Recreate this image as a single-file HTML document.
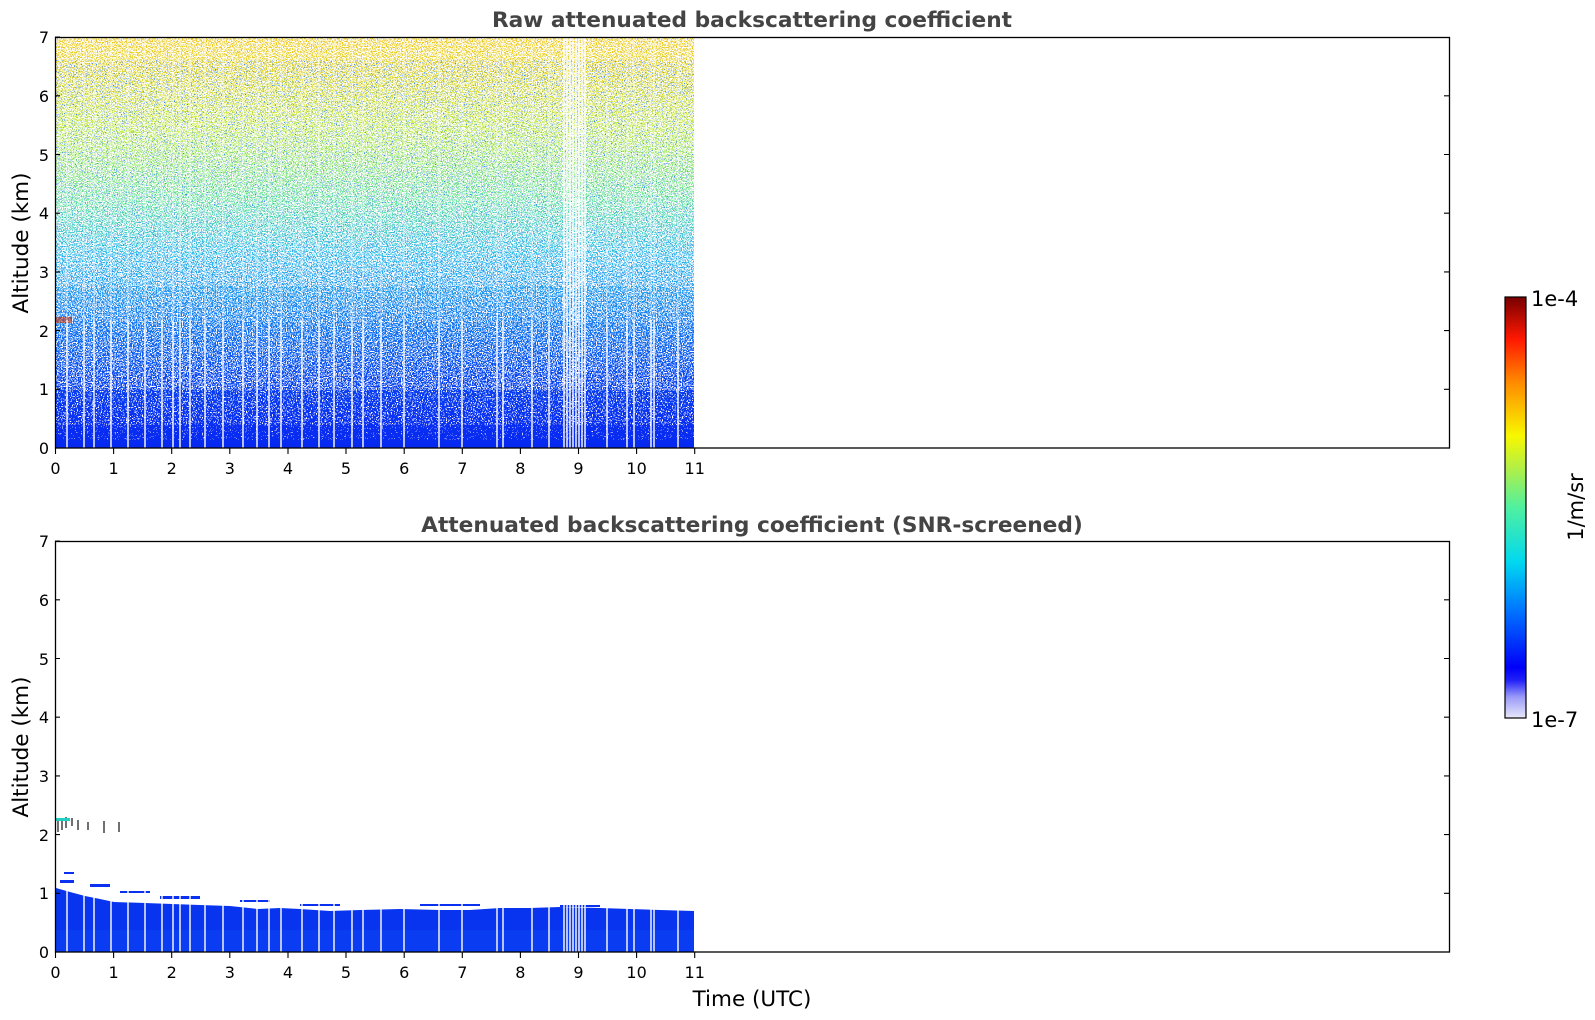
<!DOCTYPE html>
<html><head><meta charset="utf-8"><style>
html,body{margin:0;padding:0;background:#fff;}
svg{display:block;font-family:"DejaVu Sans","Liberation Sans",sans-serif;}
</style></head><body>
<svg width="1595" height="1020" viewBox="0 0 1595 1020" xmlns="http://www.w3.org/2000/svg">
<defs>
<linearGradient id="gTop" x1="0" y1="1" x2="0" y2="0">
<stop offset="0" stop-color="#0628f0"/>
<stop offset="0.06" stop-color="#0a30f2"/>
<stop offset="0.17" stop-color="#0a44f0"/>
<stop offset="0.32" stop-color="#1580f0"/>
<stop offset="0.47" stop-color="#30c0e8"/>
<stop offset="0.6" stop-color="#70e8a0"/>
<stop offset="0.78" stop-color="#c8ee50"/>
<stop offset="1" stop-color="#f0c820"/>
</linearGradient>
<linearGradient id="gCb" x1="0" y1="1" x2="0" y2="0">
<stop offset="0" stop-color="#e8e8fa"/>
<stop offset="0.05" stop-color="#9a9af8"/>
<stop offset="0.09" stop-color="#2020f8"/>
<stop offset="0.12" stop-color="#0000f8"/>
<stop offset="0.25" stop-color="#0070ff"/>
<stop offset="0.37" stop-color="#00d8f0"/>
<stop offset="0.5" stop-color="#50f0a0"/>
<stop offset="0.6" stop-color="#b8f040"/>
<stop offset="0.67" stop-color="#f8f800"/>
<stop offset="0.8" stop-color="#ff8800"/>
<stop offset="0.9" stop-color="#ff1800"/>
<stop offset="1" stop-color="#780000"/>
</linearGradient>
<filter id="n1" x="0" y="0" width="1" height="1" filterUnits="objectBoundingBox">
<feTurbulence type="fractalNoise" baseFrequency="0.8" numOctaves="1" seed="3"/>
<feColorMatrix type="matrix" values="0 0 0 0 1  0 0 0 0 1  0 0 0 0 1  20 0 0 0 -11.5"/>
<feComponentTransfer><feFuncA type="discrete" tableValues="0 1"/></feComponentTransfer>
</filter>
<filter id="n2" x="0" y="0" width="1" height="1" filterUnits="objectBoundingBox">
<feTurbulence type="fractalNoise" baseFrequency="0.8" numOctaves="1" seed="5"/>
<feColorMatrix type="matrix" values="0 0 0 0 1  0 0 0 0 1  0 0 0 0 1  20 0 0 0 -10.2"/>
<feComponentTransfer><feFuncA type="discrete" tableValues="0 1"/></feComponentTransfer>
</filter>
<filter id="n25" x="0" y="0" width="1" height="1" filterUnits="objectBoundingBox">
<feTurbulence type="fractalNoise" baseFrequency="0.8" numOctaves="1" seed="6"/>
<feColorMatrix type="matrix" values="0 0 0 0 1  0 0 0 0 1  0 0 0 0 1  20 0 0 0 -9.7"/>
<feComponentTransfer><feFuncA type="discrete" tableValues="0 1"/></feComponentTransfer>
</filter>
<filter id="n3" x="0" y="0" width="1" height="1" filterUnits="objectBoundingBox">
<feTurbulence type="fractalNoise" baseFrequency="0.8" numOctaves="1" seed="7"/>
<feColorMatrix type="matrix" values="0 0 0 0 1  0 0 0 0 1  0 0 0 0 1  20 0 0 0 -9.3"/>
<feComponentTransfer><feFuncA type="discrete" tableValues="0 1"/></feComponentTransfer>
</filter>
<filter id="n4" x="0" y="0" width="1" height="1" filterUnits="objectBoundingBox">
<feTurbulence type="fractalNoise" baseFrequency="0.8" numOctaves="1" seed="9"/>
<feColorMatrix type="matrix" values="0 0 0 0 1  0 0 0 0 1  0 0 0 0 1  20 0 0 0 -13"/>
<feComponentTransfer><feFuncA type="discrete" tableValues="0 1"/></feComponentTransfer>
</filter>
<filter id="nb" x="0" y="0" width="1" height="1" filterUnits="objectBoundingBox">
<feTurbulence type="fractalNoise" baseFrequency="0.9" numOctaves="1" seed="21"/>
<feColorMatrix type="matrix" values="0 0 0 0 0.05  0 0 0 0 0.25  0 0 0 0 0.95  20 0 0 0 -12.5"/>
<feComponentTransfer><feFuncA type="discrete" tableValues="0 1"/></feComponentTransfer>
</filter>
</defs>

<text x="752" y="27" text-anchor="middle" font-size="21.7" font-weight="bold" fill="#444">Raw attenuated backscattering coefficient</text>
<text x="752" y="532" text-anchor="middle" font-size="21.7" font-weight="bold" fill="#444">Attenuated backscattering coefficient (SNR-screened)</text>

<!-- TOP data -->
<rect x="56" y="37" width="638" height="411" fill="url(#gTop)"/>
<rect x="56" y="37" width="638" height="250" fill="#fff" filter="url(#n3)"/>
<rect x="56" y="287" width="638" height="35" fill="#fff" filter="url(#n25)"/>
<rect x="56" y="322" width="638" height="68" fill="#fff" filter="url(#n2)"/>
<rect x="56" y="390" width="638" height="35" fill="#fff" filter="url(#n1)"/>
<rect x="56" y="425" width="638" height="15" fill="#fff" filter="url(#n4)"/>
<rect x="56" y="60" width="638" height="330" fill="#000" filter="url(#nb)"/>
<rect x="56" y="317" width="16" height="6" fill="#c03010" opacity="0.6"/>
<g stroke="#fff" stroke-width="1.4">
<path d="M67 320V448M84 320V448M94 320V448M111 320V448M128 320V448M145 320V448M162 320V448M173 320V448M180 320V448M190 320V448M205 320V448M223 320V448M243 320V448M257 320V448M269 320V448M281 320V448M302 320V448M319 320V448M334 320V448M352 320V448M363 320V448M381 320V448M404 320V448M439 320V448M462 320V448M497 320V448M503 320V448M532 320V448M549 320V448M564 37V448M567 37V448M570 37V448M573 37V448M576 37V448M579 37V448M582 37V448M585 37V448M607 320V448M627 320V448M634 320V448M651 320V448M654 320V448M678 320V448"/>
</g>
<g stroke="#fff" stroke-width="1.2" opacity="0.45">
<path d="M67 37V320M84 37V320M94 37V320M111 37V320M128 37V320M145 37V320M162 37V320M173 37V320M180 37V320M190 37V320M205 37V320M223 37V320M243 37V320M257 37V320M269 37V320M281 37V320M302 37V320M319 37V320M334 37V320M352 37V320M363 37V320M381 37V320M404 37V320M439 37V320M462 37V320M497 37V320M503 37V320M532 37V320M549 37V320M607 37V320M627 37V320M634 37V320M651 37V320M654 37V320M678 37V320"/>
</g>

<!-- BOTTOM data -->
<polygon points="56,952 56,888 70,892 85,896 100,899 114,902 145,903 172,904 200,905 230,906 258,909 280,908 300,909 330,911 360,910 400,909 440,910 470,910 500,908 530,908 560,907 600,908 630,909 660,910 694,911 694,952" fill="#0834f0"/>
<rect x="56" y="930" width="638" height="22" fill="#0a3cf2"/>
<g fill="#0a30f0">
<rect x="60" y="880" width="14" height="3"/><rect x="64" y="872" width="10" height="2"/><rect x="90" y="884" width="20" height="3"/><rect x="120" y="891" width="30" height="2"/><rect x="160" y="896" width="40" height="3"/><rect x="240" y="900" width="30" height="2"/><rect x="300" y="904" width="40" height="2"/><rect x="420" y="904" width="60" height="2"/><rect x="560" y="905" width="40" height="2"/>
</g>
<g stroke="#111" stroke-width="1.2">
<path d="M58 820V832M62 818V830M66 817V828M72 818V826M78 820V830M88 822V830M104 821V833M119 822V832"/>
</g>
<rect x="56" y="818" width="14" height="3" fill="#20d0c0"/>
<g stroke="#fff" stroke-width="1.4">
<path d="M67 890V952M84 890V952M94 890V952M111 890V952M128 890V952M145 890V952M162 890V952M173 890V952M180 890V952M190 890V952M205 890V952M223 890V952M243 890V952M257 890V952M269 890V952M281 890V952M302 890V952M319 890V952M334 890V952M352 890V952M363 890V952M381 890V952M404 890V952M439 890V952M462 890V952M497 890V952M503 890V952M532 890V952M549 890V952M564 890V952M567 890V952M570 890V952M573 890V952M576 890V952M579 890V952M582 890V952M585 890V952M607 890V952M627 890V952M634 890V952M651 890V952M654 890V952M678 890V952"/>
</g>

<rect x="55.5" y="37.5" width="1394" height="410.5" fill="none" stroke="#000" stroke-width="1.3"/>
<rect x="55.5" y="541.5" width="1394" height="410.5" fill="none" stroke="#000" stroke-width="1.3"/>

<g stroke="#000" stroke-width="1.1">
<path d="M55 448h5M55 389.3h5M55 330.6h5M55 271.9h5M55 213.2h5M55 154.5h5M55 95.8h5M55 37h5
M1450 389.3h-6M1450 330.6h-6M1450 271.9h-6M1450 213.2h-6M1450 154.5h-6M1450 95.8h-6
M55 952h5M55 893.3h5M55 834.6h5M55 775.9h5M55 717.2h5M55 658.5h5M55 599.8h5M55 541h5
M1450 893.3h-6M1450 834.6h-6M1450 775.9h-6M1450 717.2h-6M1450 658.5h-6M1450 599.8h-6"/>
<path d="M55.5 448v6M113.6 448v6M171.7 448v6M229.8 448v6M288 448v6M346 448v6M404.2 448v6M462.3 448v6M520.4 448v6M578.5 448v6M636.6 448v6M694.7 448v6
M55.5 952v6M113.6 952v6M171.7 952v6M229.8 952v6M288 952v6M346 952v6M404.2 952v6M462.3 952v6M520.4 952v6M578.5 952v6M636.6 952v6M694.7 952v6"/>
</g>
<g font-size="16" fill="#000" text-anchor="end">
<text x="49" y="454">0</text><text x="49" y="395">1</text><text x="49" y="337">2</text><text x="49" y="278">3</text><text x="49" y="219">4</text><text x="49" y="161">5</text><text x="49" y="102">6</text><text x="49" y="43">7</text>
<text x="49" y="958">0</text><text x="49" y="899">1</text><text x="49" y="841">2</text><text x="49" y="782">3</text><text x="49" y="723">4</text><text x="49" y="665">5</text><text x="49" y="606">6</text><text x="49" y="547">7</text>
</g>
<g font-size="16" fill="#000" text-anchor="middle">
<text x="55.5" y="474">0</text><text x="113.6" y="474">1</text><text x="171.7" y="474">2</text><text x="229.8" y="474">3</text><text x="288" y="474">4</text><text x="346" y="474">5</text><text x="404.2" y="474">6</text><text x="462.3" y="474">7</text><text x="520.4" y="474">8</text><text x="578.5" y="474">9</text><text x="636.6" y="474">10</text><text x="694.7" y="474">11</text>
<text x="55.5" y="978">0</text><text x="113.6" y="978">1</text><text x="171.7" y="978">2</text><text x="229.8" y="978">3</text><text x="288" y="978">4</text><text x="346" y="978">5</text><text x="404.2" y="978">6</text><text x="462.3" y="978">7</text><text x="520.4" y="978">8</text><text x="578.5" y="978">9</text><text x="636.6" y="978">10</text><text x="694.7" y="978">11</text>
</g>
<text transform="translate(28,243) rotate(-90)" text-anchor="middle" font-size="21.5" fill="#000">Altitude (km)</text>
<text transform="translate(28,747) rotate(-90)" text-anchor="middle" font-size="21.5" fill="#000">Altitude (km)</text>
<text x="752" y="1006" text-anchor="middle" font-size="21.5" fill="#000">Time (UTC)</text>

<rect x="1505" y="297" width="21" height="421" fill="url(#gCb)" stroke="#000" stroke-width="1.2"/>
<text x="1531" y="306" font-size="21" fill="#000">1e-4</text>
<text x="1531" y="727" font-size="21" fill="#000">1e-7</text>
<text transform="translate(1583,507) rotate(-90)" text-anchor="middle" font-size="21" fill="#000">1/m/sr</text>
</svg>
</body></html>
